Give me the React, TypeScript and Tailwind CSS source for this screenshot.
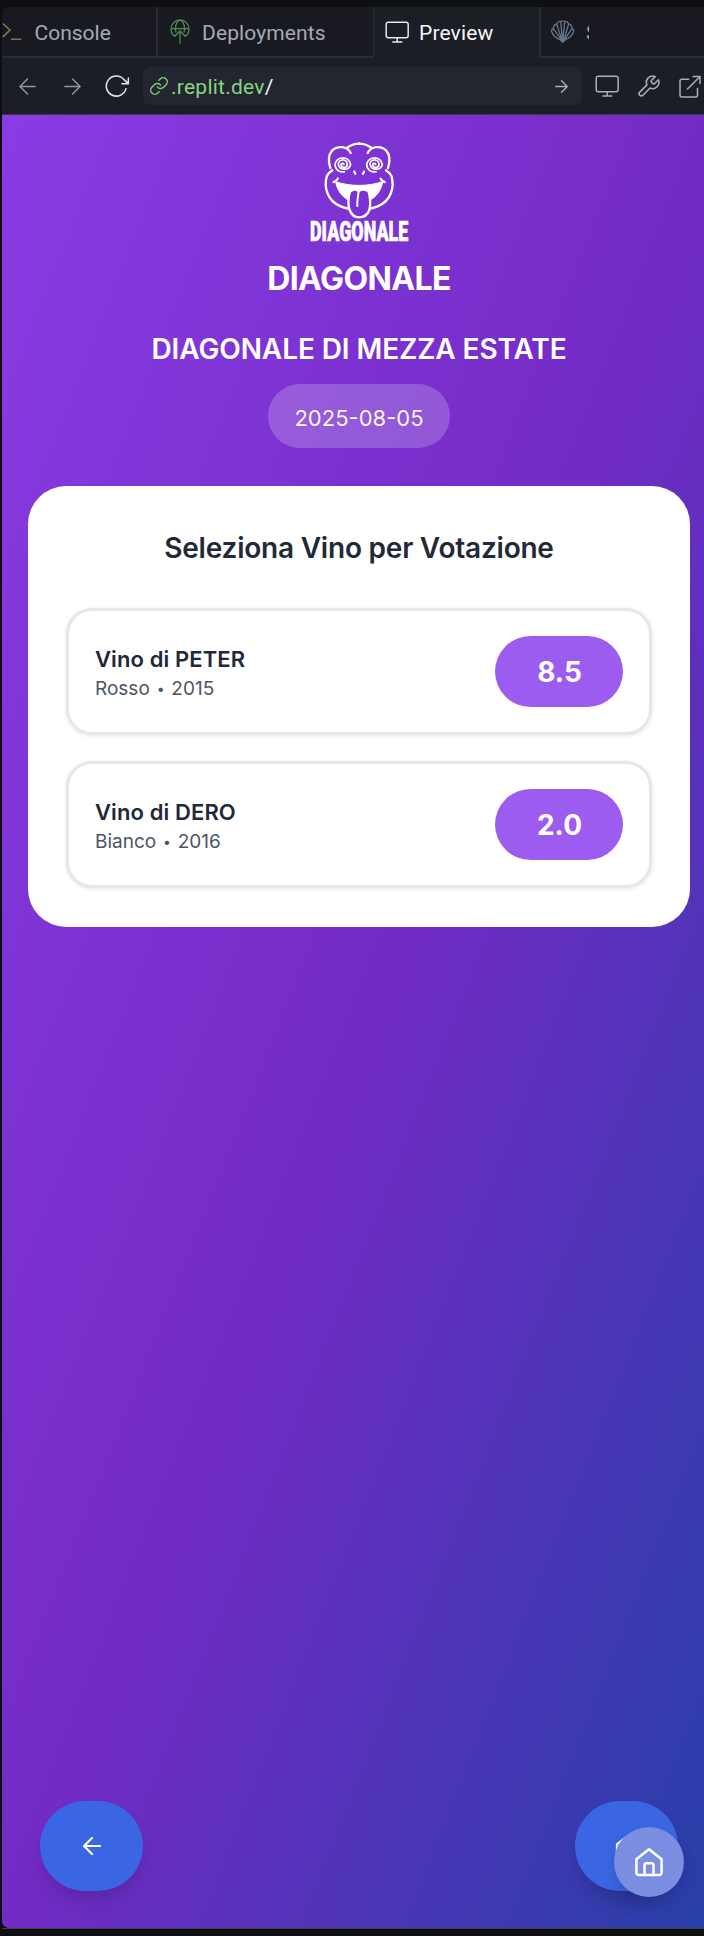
import type { ReactNode } from "react";

function ConsoleIcon() {
  return (
    <svg className="h-[20px] w-[20px] shrink-0" viewBox="0 0 20 20" fill="none" stroke="#85754f" strokeWidth="1.6">
      <path d="M0.8 1.5 8 8 0.8 14.8M9 17.2h10.3" />
    </svg>
  );
}

function DeployIcon() {
  return (
    <svg className="h-[27px] w-[22px] shrink-0" viewBox="507 57 66 81" fill="none" stroke="#4f8a55" strokeWidth="4">
      <path d="M526 113C517 108 513 99 513 90a27 27 0 0 1 54 0c0 9-4 18-13 23" />
      <path d="M514 89h52M528 100c-4-14-1-31 12-37 13 6 16 23 12 37" />
      <path d="M540 134V97M524 112l16-16 16 16" />
    </svg>
  );
}

function MonitorIcon({ color }: { color: string }) {
  return (
    <svg className="h-[23px] w-[25px] shrink-0" viewBox="0 0 25 23" fill="none" stroke={color} strokeWidth="1.5" strokeLinecap="round">
      <rect x="1.2" y="1.2" width="22" height="15.5" rx="2.2" />
      <path d="M12.2 17v4M7.8 21h9" />
    </svg>
  );
}

function ShellIcon() {
  return (
    <svg className="h-[25px] w-[25px] shrink-0" viewBox="258 60 75 75" fill="none" stroke="#64748b" strokeWidth="4" strokeLinejoin="round">
      <path d="M287 121C276 117 267 109 263 98c-1-5 2-8 5-9 0-7 3-12 10-14 3-6 8-9 12-7 3-3 9-3 12 0 5-2 10 1 12 7 7 2 10 7 10 14 4 1 6 4 5 9-4 11-13 19-24 23" />
      <path d="M268 89 291 121M278 75 293 121M290 68 295 119M302 68 297 119M314 75 300 121M324 89 302 121" />
      <path d="M286 121h20l-10 9z" fill="#64748b" />
    </svg>
  );
}

function Arrow({ className, flip, color, width }: { className: string; flip?: boolean; color: string; width: number }) {
  return (
    <svg className={className} viewBox="0 0 18 18" fill="none" stroke={color} strokeWidth={width} strokeLinecap="round" strokeLinejoin="round">
      <path d={flip ? "M1 9h16M9 1l8 8-8 8" : "M17 9H1M9 1 1 9l8 8"} />
    </svg>
  );
}

function ReloadIcon() {
  return (
    <svg className="ml-[24px] h-[23px] w-[25px] shrink-0" viewBox="315 223 75 69" fill="none" stroke="#e4e6ea" strokeWidth="4.6" strokeLinecap="round" strokeLinejoin="round">
      <path d="M378 264a30 30 0 1 1-6-27l13 12M385 232v17h-19" />
    </svg>
  );
}

function LinkIcon() {
  return (
    <svg className="h-[20px] w-[20px] shrink-0" viewBox="0 0 24 24" fill="none" stroke="#7ccf7c" strokeWidth="1.7" strokeLinecap="round" strokeLinejoin="round">
      <path d="M10 13a5 5 0 0 0 7.54.54l3-3a5 5 0 0 0-7.07-7.07l-1.72 1.71" />
      <path d="M14 11a5 5 0 0 0-7.54-.54l-3 3a5 5 0 0 0 7.07 7.07l1.71-1.71" />
    </svg>
  );
}

function WrenchIcon() {
  return (
    <svg className="ml-[16px] h-[25px] w-[25px] shrink-0" viewBox="0 0 24 24" fill="none" stroke="#a9aeb8" strokeWidth="1.5" strokeLinecap="round" strokeLinejoin="round">
      <path d="M14.7 6.3a1 1 0 0 0 0 1.4l1.6 1.6a1 1 0 0 0 1.4 0l3.77-3.77a6 6 0 0 1-7.94 7.94l-6.91 6.91a2.12 2.12 0 0 1-3-3l6.91-6.91a6 6 0 0 1 7.94-7.94l-3.76 3.76z" />
    </svg>
  );
}

function ExternalIcon() {
  return (
    <svg className="ml-[18px] h-[23px] w-[22px] shrink-0" viewBox="0 0 22 23" fill="none" stroke="#a9aeb8" strokeWidth="1.5" strokeLinecap="round" strokeLinejoin="round">
      <path d="M9.5 4.2H3a2 2 0 0 0-2 2V20a2 2 0 0 0 2 2h13.500a2 2 0 0 0 2-2v-6.500M8.500 14 20.800 1.700M14 1.500h7v7" />
    </svg>
  );
}

function HomeIcon({ className, width }: { className: string; width: number }) {
  return (
    <svg className={className} viewBox="0 0 30 30" fill="none" stroke="#fff" strokeWidth={width} strokeLinecap="round" strokeLinejoin="round">
      <path d="M2.400 12.200 15 2.300l12.600 9.900v13.400a2.400 2.400 0 0 1-2.400 2.400H4.800a2.400 2.400 0 0 1-2.400-2.400z" />
      <path d="M10.500 28V18a1.800 1.800 0 0 1 1.800-1.800h5.400a1.800 1.800 0 0 1 1.800 1.800v10" />
    </svg>
  );
}

const SPIRAL = "M162 103A5 5 0 0 0 153 103A9.500 9.500 0 0 0 172 103A13.500 13.500 0 0 0 145 103A19 19 0 0 0 182 103A24 24 0 0 0 135 103C135 118 148 129 163 125";

function FaceSide() {
  return (
    <g>
      <path d="M182 69C172 48 142 46 126 62C112 78 116 98 121 114" />
      <path d="M127 121C122 124 115 128 111 137C100 172 113 214 152 229C160 232 168 235 177 236" />
      <path d="M173 52C186 43 200 41 208 41" />
      <path d="M131 156C136 155 140 152 143 146" />
      <path d="M193 125l3 6" strokeWidth="7" />
    </g>
  );
}

function Logo() {
  return (
    <svg className="h-[100px] w-[100px] overflow-visible" viewBox="57 36 300 300" fill="none" stroke="#fff" strokeWidth="7" strokeLinecap="round" strokeLinejoin="round">
      <FaceSide />
      <g transform="translate(415 0) scale(-1 1)">
        <FaceSide />
      </g>
      <path d={SPIRAL} strokeWidth="5.200" />
      <path d={SPIRAL} strokeWidth="5.200" transform="translate(95 0)" />
      <path d="M137 155C180 170 234 170 278 155C274 180 260 200 240 210H176C155 200 141 180 137 155Z" fill="#fff" strokeWidth="3" />
      <path d="M180 185C190 176 200 178 206 184C214 177 228 177 236 185C241 205 242 225 238 240C232 256 222 262 207 262C192 262 184 254 179 240C174 225 174 205 180 185Z" fill="#7c32d2" strokeWidth="7" />
      <path d="M206 184C204 200 201 214 202 228" strokeWidth="6" />
      <text x="60" y="332" textLength="295" lengthAdjust="spacingAndGlyphs" fontFamily="Roboto, sans-serif" fontWeight="900" fontSize="84" fill="#fff" strokeWidth="2">
        DIAGONALE
      </text>
    </svg>
  );
}

function Tab({ className, children }: { className: string; children: ReactNode }) {
  return <div className={"flex h-[51px] shrink-0 items-center whitespace-nowrap " + className}>{children}</div>;
}

const WINES = [
  { name: "Vino di PETER", kind: "Rosso", year: "2015", score: "8.5" },
  { name: "Vino di DERO", kind: "Bianco", year: "2016", score: "2.0" },
];

export default function App() {
  return (
    <div className="flex h-[1936px] w-[704px] flex-col overflow-hidden bg-[#0e0f13] pt-[7px] pl-[2px] font-['Inter',sans-serif]">
      <div className="flex w-[702px] shrink-0 overflow-hidden rounded-tl-[6px] font-['Roboto',sans-serif] text-[21px] leading-[26px] text-[#a5abb6]">
        <Tab className="w-[156px] border-r-2 border-b-2 border-[#2a2b35] bg-[#191921]">
          <ConsoleIcon />
          <span className="mt-[3px] ml-[12.500px]">Console</span>
        </Tab>
        <Tab className="w-[216px] border-r border-b-2 border-[#2a2b35] bg-[#191921] pl-[11px]">
          <DeployIcon />
          <span className="mt-[3px] ml-[11px] tracking-[0.12px]">Deployments</span>
        </Tab>
        <Tab className="w-[165px] bg-[#1c1e25] pl-[11px] text-[#f5f6f8]">
          <MonitorIcon color="#e4e6ea" />
          <span className="mt-px ml-[9px] font-[450] tracking-[0.15px]">Preview</span>
        </Tab>
        <Tab className="w-[165px] border-b-2 border-l-2 border-[#2a2b35] bg-[#191921] pl-[9px]">
          <ShellIcon />
          <span className="mt-[3px] ml-[11px] w-[3px] overflow-hidden">S</span>
        </Tab>
      </div>

      <div className="flex h-[57px] w-[702px] shrink-0 items-center overflow-hidden border-b border-[#3b3b42] bg-[#1c1e25]">
        <Arrow className="ml-[17px] h-[17px] w-[17px] shrink-0" color="#9096a1" width={1.6} />
        <Arrow className="ml-[28px] h-[17px] w-[17px] shrink-0" flip color="#9096a1" width={1.6} />
        <ReloadIcon />
        <div className="ml-[13px] flex h-[38px] w-[439px] shrink-0 items-center rounded-[7px] bg-[#24262f] pl-[6px]">
          <LinkIcon />
          <span className="mt-px ml-[2px] font-['Roboto',sans-serif] text-[21px] leading-[26px] tracking-[0.25px] text-[#86d583]">
            .replit.dev<span className="text-[#f0f2f5]">/</span>
          </span>
          <Arrow className="mr-[14px] ml-auto h-[13px] w-[13px] shrink-0" flip color="#a9aeb8" width={1.9} />
        </div>
        <div className="ml-[13px] flex items-center">
          <MonitorIcon color="#a9aeb8" />
          <WrenchIcon />
          <ExternalIcon />
        </div>
      </div>

      <div className="relative h-[1813px] w-[702px] shrink-0 overflow-hidden rounded-bl-[7px]">
        <div className="flex h-full w-[714px] flex-col items-center bg-linear-to-br/srgb from-[#8a3ce4] via-[#732bc5] to-[#263fa8] pt-[27px]">
          <Logo />
          <h1 className="mt-[17px] text-[32px] leading-[40px] font-bold tracking-[-0.6px] text-white">DIAGONALE</h1>
          <h2 className="mt-[33px] text-[28px] leading-[34px] font-semibold tracking-[-0.1px] text-white">DIAGONALE DI MEZZA ESTATE</h2>
          <div className="mt-[18px] flex h-[64px] w-[182px] items-center justify-center rounded-full bg-white/20 pt-[4px] text-[22px] text-white/95">
            2025-08-05
          </div>

          <main className="mt-[38px] h-[441px] w-[662px] rounded-[38px] bg-white px-[38px] pt-[45px]">
            <h3 className="text-center text-[28px] leading-[34px] font-semibold tracking-[-0.22px] text-[#1f2937]">
              Seleziona Vino per Votazione
            </h3>
            <div className="mt-[43px] flex flex-col gap-[26px]">
              {WINES.map((wine) => (
                <div
                  key={wine.name}
                  className="flex h-[127px] items-center justify-between rounded-[26px] border-3 border-[#e5e7eb] bg-white pr-[26px] pl-[26px] shadow-[0_1px_4px_rgba(0,0,0,0.1)]"
                >
                  <div className="pt-[4px]">
                    <p className="text-[22px] leading-[30px] font-semibold tracking-[0.1px] text-[#1f2937]">{wine.name}</p>
                    <p className="text-[19px] leading-[29px] text-[#4b5563]">
                      {wine.kind} <span className="px-[1.500px] align-[1px] text-[14px]">•</span> {wine.year}
                    </p>
                  </div>
                  <div className="flex h-[71px] w-[128px] items-center justify-center rounded-full bg-[#9d5cf0] pl-px text-[28px] font-bold text-white">
                    {wine.score}
                  </div>
                </div>
              ))}
            </div>
          </main>

          <nav className="mt-auto mb-[37px] flex w-[638px] justify-between">
            <button className="flex h-[90px] w-[103px] items-center justify-center rounded-full bg-[#3a65e3] shadow-[0_12px_18px_-3px_rgba(0,0,0,0.15)]">
              <Arrow className="h-[18px] w-[18px]" color="#fff" width={2.2} />
            </button>
            <button className="flex h-[90px] w-[103px] items-center justify-center rounded-full bg-[#3a65e3] shadow-[0_12px_18px_-3px_rgba(0,0,0,0.15)]">
              <HomeIcon className="h-[23px] w-[23px]" width={2.6} />
            </button>
          </nav>
        </div>
        <button className="absolute right-[20px] bottom-[31px] flex h-[70px] w-[70px] items-center justify-center rounded-full bg-[#7c8ee2] shadow-[0_10px_18px_-3px_rgba(0,0,0,0.15)]">
          <HomeIcon className="h-[30px] w-[30px]" width={2.5} />
        </button>
      </div>
      <div className="h-px w-[702px] shrink-0 bg-[#3f3f46]" />
    </div>
  );
}
